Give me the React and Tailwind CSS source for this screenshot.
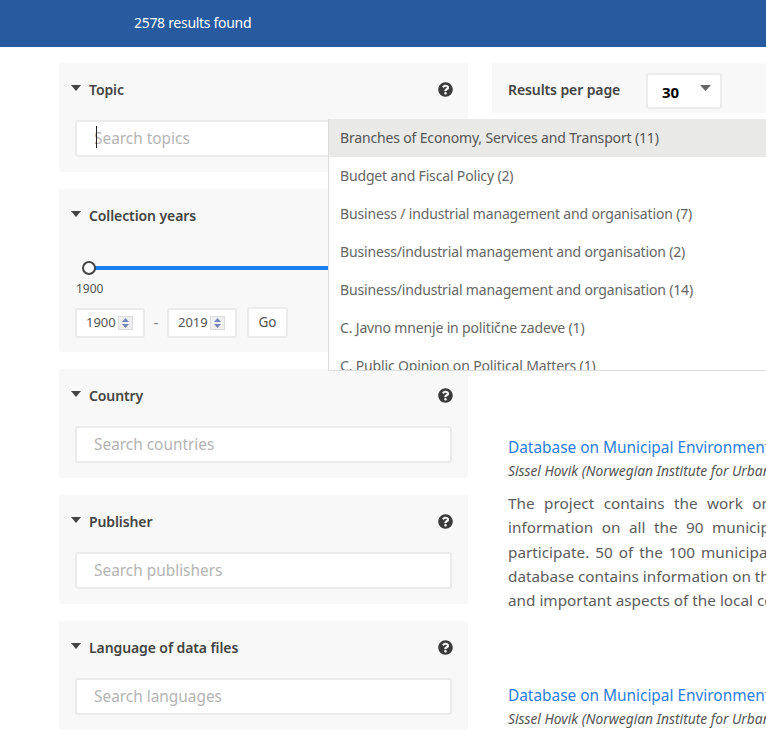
import React from 'react';
import { FaQuestionCircle } from 'react-icons/fa';

const topics = [
  'Branches of Economy, Services and Transport (11)',
  'Budget and Fiscal Policy (2)',
  'Business / industrial management and organisation (7)',
  'Business/industrial management and organisation (2)',
  'Business/industrial management and organisation (14)',
  'C. Javno mnenje in politične zadeve (1)',
  'C. Public Opinion on Political Matters (1)',
];

const Caret = () => (
  <svg width="10" height="6" viewBox="0 0 10 6" className="fill-[#444]">
    <path d="M0 0h10L5 6z" />
  </svg>
);

const Spinner = () => (
  <span className="flex h-[14px] w-[15px] flex-col items-center justify-center gap-[2px] border border-[#dcdcdc] bg-[#efefef]">
    <svg width="7" height="4" viewBox="0 0 7 4" className="fill-[#7485bd]">
      <path d="M0 4L3.5 0 7 4z" />
    </svg>
    <svg width="7" height="4" viewBox="0 0 7 4" className="fill-[#7485bd]">
      <path d="M0 0h7L3.5 4z" />
    </svg>
  </span>
);

const FilterHeader = ({ title }) => (
  <div className="flex h-[20px] items-center justify-between">
    <div className="flex items-center">
      <span className="ml-[-4px] mb-[3px] w-[18px]">
        <Caret />
      </span>
      <h3 className="text-[14px] font-semibold tracking-[-0.1px] text-[#444]">{title}</h3>
    </div>
    <FaQuestionCircle className="mr-[-1px] text-[15px] text-[#3a3a3a]" />
  </div>
);

const SearchFilter = ({ title, placeholder, caret }) => (
  <section className="h-[109px] rounded-[3px] bg-[#f8f8f8] pl-[16px] pr-[16px] pt-[16px]">
    <FilterHeader title={title} />
    <div className="relative mt-[21px]">
      <input
        readOnly
        placeholder={placeholder}
        className="h-[37px] w-full rounded-[3px] border-2 border-[#ebebeb] bg-white pl-[17px] text-[15.4px] outline-none placeholder:text-[#b4b4b4]"
      />
      {caret && <span className="absolute left-[21px] top-[6px] h-[22px] w-px bg-[#222]" />}
    </div>
  </section>
);

const YearBox = ({ value }) => (
  <div className="flex h-[30px] w-[70px] items-center gap-[2px] rounded-[3px] border-2 border-[#ebebeb] bg-white pl-[9px] text-[13px] text-[#555]">
    <span>{value}</span>
    <Spinner />
  </div>
);

const Result = ({ children }) => (
  <article>
    <a className="block whitespace-nowrap text-[15.4px] leading-[24px] text-[#2a7de1]">
      Database on Municipal Environmental Policy and Local Agenda 21
    </a>
    <p className="whitespace-nowrap text-[13.8px] italic leading-[21px] text-[#555]">
      Sissel Hovik (Norwegian Institute for Urban and Regional Research)
    </p>
    {children}
  </article>
);

export default function App() {
  return (
    <div className="relative h-[737px] w-[766px] overflow-hidden bg-white font-['Noto_Sans',sans-serif]">
      <header className="flex h-[47px] items-center bg-[#275a9e] pb-[2px] pl-[134px] text-[14px] tracking-[-0.3px] text-white">
        2578 results found
      </header>

      <div className="mt-[16px] flex gap-[24px] pl-[59px]">
        <aside className="flex w-[409px] shrink-0 flex-col gap-[17px]">
          <SearchFilter title="Topic" placeholder="Search topics" caret />

          <section className="h-[163px] rounded-[3px] bg-[#f8f8f8] pl-[16px] pr-[16px] pt-[16px]">
            <FilterHeader title="Collection years" />
            <div className="relative mt-[41px] ml-[14px] h-[4px] bg-[#1a7fee]">
              <span className="absolute left-[-7px] top-[-5px] h-[14px] w-[14px] rounded-full border-2 border-[#444] bg-white" />
            </div>
            <div className="mt-[11px] ml-[1px] text-[12px] leading-[16px] text-[#555]">1900</div>
            <div className="mt-[10px] flex items-center">
              <YearBox value="1900" />
              <span className="w-[22px] text-center text-[14px] text-[#777]">-</span>
              <YearBox value="2019" />
              <button className="ml-[10px] h-[31px] w-[41px] rounded-[3px] border-2 border-[#ebebeb] bg-white text-[13.5px] text-[#555]">
                Go
              </button>
            </div>
          </section>

          <SearchFilter title="Country" placeholder="Search countries" />
          <SearchFilter title="Publisher" placeholder="Search publishers" />
          <SearchFilter title="Language of data files" placeholder="Search languages" />
        </aside>

        <main className="w-[600px] shrink-0">
          <div className="flex h-[50px] items-start rounded-[3px] bg-[#f8f8f8] pl-[16px] pt-[10px]">
            <span className="mt-[6px] w-[138px] text-[14px] font-semibold tracking-[-0.1px] text-[#444]">
              Results per page
            </span>
            <div className="flex h-[36px] w-[76px] items-center justify-between rounded-[3px] border-2 border-[#ebebeb] bg-white pl-[14px] pr-[9px]">
              <span className="mt-[2px] text-[15px] font-bold text-black">30</span>
              <span className="mb-[6px]">
                <svg width="11" height="6" viewBox="0 0 11 6" className="fill-[#666]">
                  <path d="M0 0h11L5.5 6z" />
                </svg>
              </span>
            </div>
          </div>

          <div className="mt-[323px] pl-[16px]">
            <Result>
              <div className="mt-[10px] whitespace-nowrap text-[15.3px] leading-[24.3px] text-[#5c5c5c]">
                <p className="[word-spacing:5.5px]">The project contains the work on the</p>
                <p className="[word-spacing:4.5px]">information on all the 90 municipalities</p>
                <p className="[word-spacing:2px]">participate. 50 of the 100 municipalities</p>
                <p>database contains information on the</p>
                <p>and important aspects of the local community</p>
              </div>
            </Result>
          </div>
          <div className="mt-[72px] pl-[16px]">
            <Result />
          </div>
        </main>
      </div>

      {/* open topic suggestions, over the filters */}
      <ul className="absolute left-[328px] top-[119px] h-[252px] w-[460px] overflow-hidden border-b border-l border-[#dddddd] bg-white text-[14px] tracking-[-0.16px] text-[#666]">
        {topics.map((topic, i) => (
          <li
            key={topic}
            className={
              i === 0
                ? 'flex h-[38px] items-center whitespace-nowrap bg-[#e9e9e7] pb-[1px] pl-[11px] text-[#555]'
                : 'flex h-[38px] items-center whitespace-nowrap pb-[1px] pl-[11px]'
            }
          >
            {topic}
          </li>
        ))}
      </ul>
    </div>
  );
}
